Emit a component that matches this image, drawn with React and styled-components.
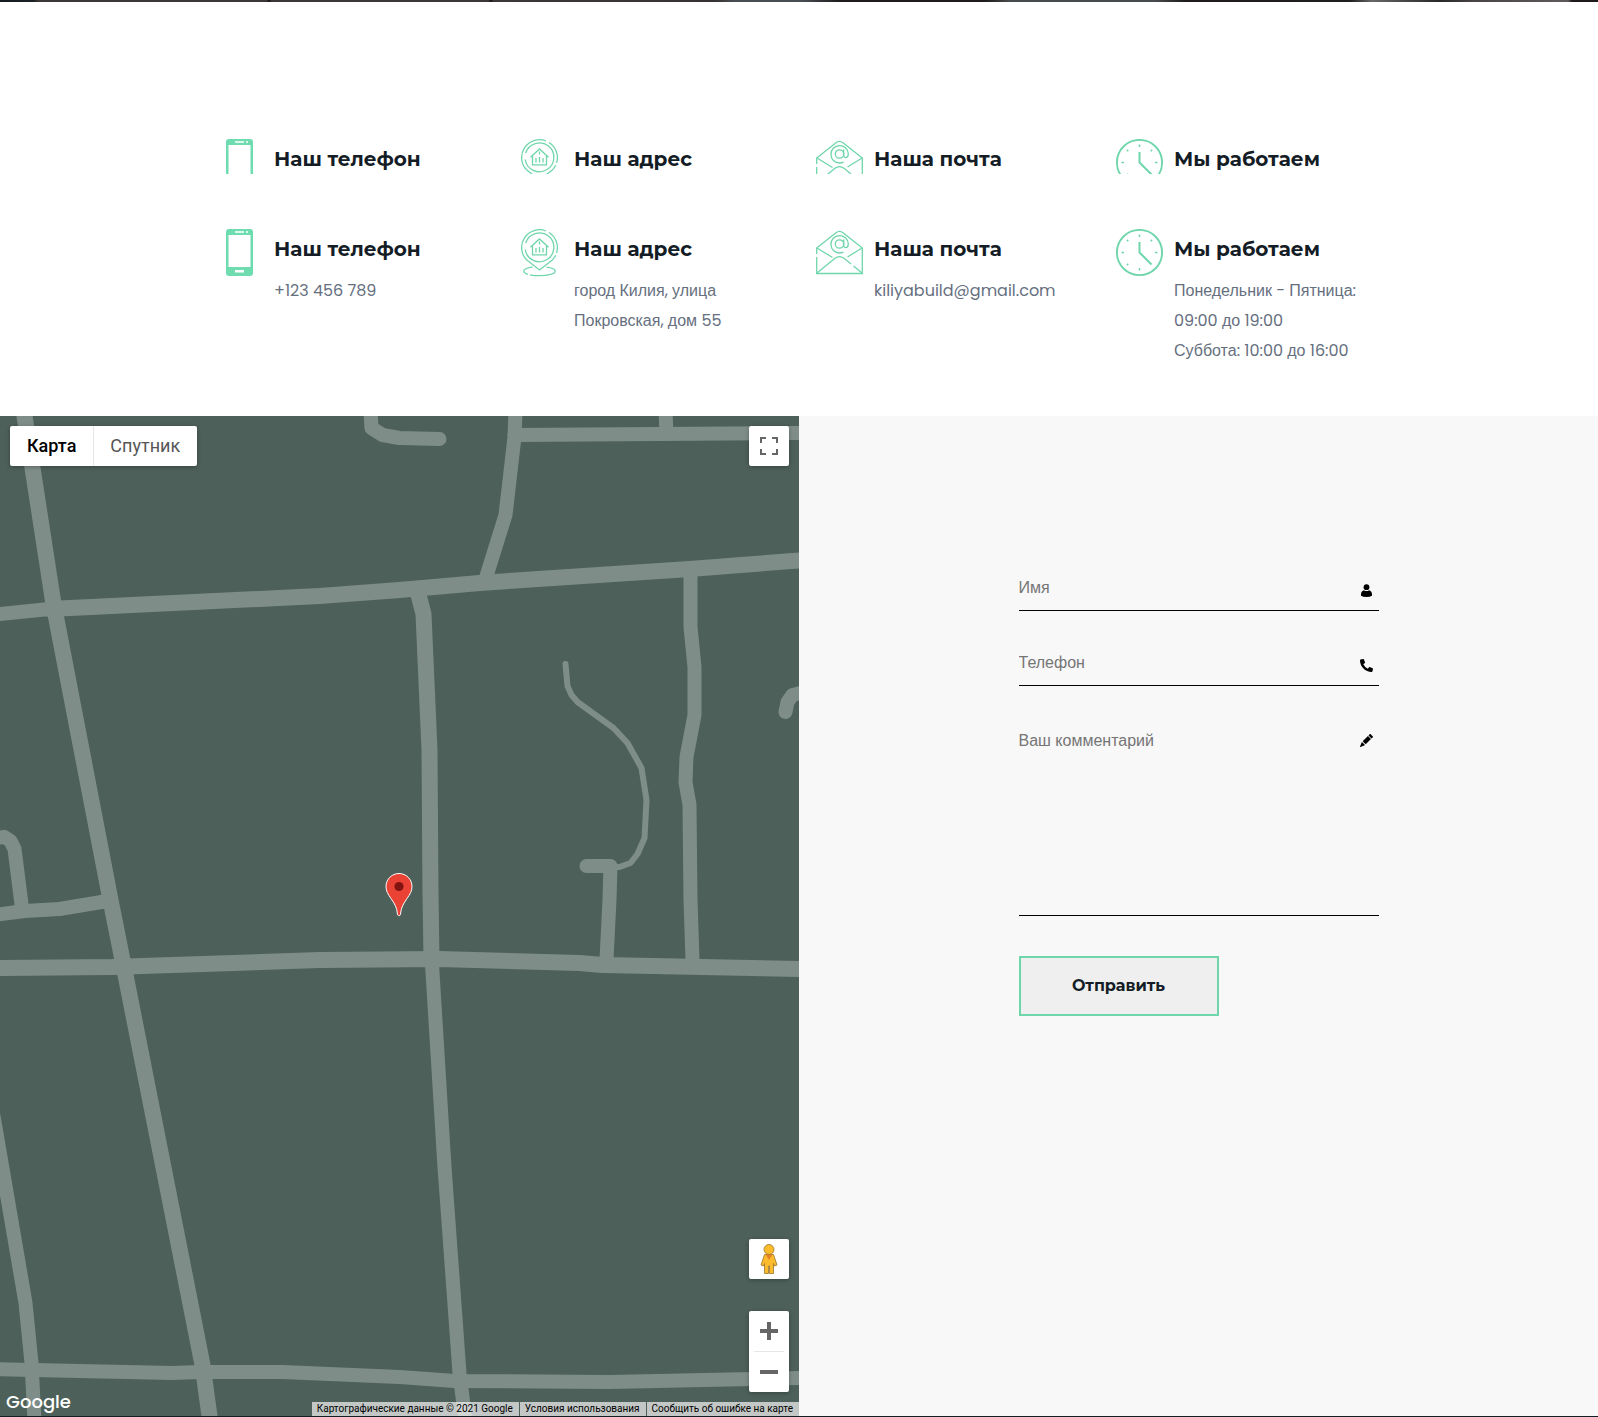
import React from "react";
import styled, { createGlobalStyle } from "styled-components";
import { BsPencilFill } from "react-icons/bs";
import { FaPhoneAlt } from "react-icons/fa";

const fonts = {
  heading: '"Montserrat", "Inter", sans-serif',
  body: '"Poppins", "Liberation Sans", Arial, sans-serif',
  field: '"Liberation Sans", Arial, sans-serif',
  map: '"Roboto", Arial, sans-serif',
};

const colors = {
  accent: "#6fd6ab",
  ink: "#141d26",
  muted: "#666f80",
  land: "#4d6059",
  road: "#7f8d89",
  panel: "#f8f8f8",
};

const GlobalStyle = createGlobalStyle`
  *, *::before, *::after { box-sizing: border-box; }
  body {
    margin: 0;
    background: #fff;
    color: ${colors.ink};
    font-family: ${fonts.body};
    font-size: 16px;
  }
  h3, p { margin: 0; }
`;

const HeroEdge = styled.div`
  height: 2px;
  background: linear-gradient(
    90deg,
    #161b20 0, #1d2226 34px, #3b3736 38px, #3b3736 267px, #1d1a1a 268px, #1d1a1a 270px,
    #3b3736 271px, #3b3736 489px, #1d1a1a 490px, #1d1a1a 492px, #3b3736 493px, #363231 715px,
    #4a4f54 735px, #4a4f54 800px, #1f1b1e 840px, #1f1b1e 985px, #484b4d 1010px, #484b4d 1155px,
    #1f1b1f 1185px, #211e22 1350px, #6a6769 1372px, #4a4a4c 1400px, #2a2729 1440px,
    #494547 1475px, #5e5a5b 1568px, #1e1a1a 1572px
  );
`;

const Contacts = styled.section`
  padding: 137px 0 50px;
`;

const ContactGrid = styled.div`
  display: grid;
  grid-template-columns: repeat(4, 1fr);
  max-width: 1200px;
  margin: 0 auto;
  ${(p) => p.$peek && "height: 35px; margin-bottom: 55px; overflow: hidden;"}
`;

const ContactCard = styled.article`
  display: grid;
  grid-template-columns: 50px 1fr;
  column-gap: 10px;
  padding: 0 15px;
`;

const ContactIcon = styled.svg`
  display: block;
  width: 50px;
  height: 48px;
  fill: none;
  stroke: ${colors.accent};
  stroke-width: 1.3;
`;

const ContactTitle = styled.h3`
  padding: 8px 0 15px;
  font: 700 20px/24px ${fonts.heading};
`;

const ContactText = styled.p`
  color: ${colors.muted};
  font-size: 16px;
  line-height: 30px;
`;

const Split = styled.section`
  display: grid;
  grid-template-columns: 1fr 1fr;
  min-height: 1000px;
`;

const MapPane = styled.div`
  position: relative;
  overflow: hidden;
  background: ${colors.land};
  font-family: ${fonts.map};
`;

const MapDrawing = styled.svg`
  position: absolute;
  inset: 0;
  width: 100%;
  height: 100%;
`;

const MapControl = styled.div`
  position: absolute;
  display: flex;
  background: #fff;
  border-radius: 2px;
  box-shadow: 0 1px 4px rgba(0, 0, 0, 0.3);
`;

const TypeSwitch = styled(MapControl)`
  top: 10px;
  left: 10px;
`;

const TypeButton = styled.button`
  height: 40px;
  padding: 0 17px;
  border: 0;
  background: none;
  color: ${(p) => (p.$active ? "#000" : "#565656")};
  font: ${(p) => (p.$active ? 500 : 400)} 18px/40px ${fonts.map};
  & + & { box-shadow: inset 1px 0 #e6e6e6; }
`;

const TopRight = styled(MapControl)`
  top: 10px;
  right: 10px;
`;

const BottomRight = styled.div`
  position: absolute;
  right: 10px;
  bottom: 24px;
  display: grid;
  gap: 32px;
  ${MapControl} {
    position: static;
    flex-direction: column;
    align-items: center;
  }
`;

const IconButton = styled.button`
  display: grid;
  place-items: center;
  width: 40px;
  height: 40px;
  padding: 0;
  border: 0;
  background: none;
  color: #666;
`;

const Divider = styled.span`
  width: 30px;
  height: 1px;
  background: #e6e6e6;
`;

const GoogleLink = styled.a`
  position: absolute;
  left: 6px;
  bottom: 2px;
  color: #fff;
  font: 500 18px/24px "Product Sans", "Poppins", sans-serif;
  text-decoration: none;
`;

const Attribution = styled.div`
  position: absolute;
  right: 0;
  bottom: 0;
  display: flex;
  gap: 1px;
`;

const Credit = styled.span`
  padding: 0 6px 0 5px;
  background: rgba(245, 245, 245, 0.7);
  color: #000;
  font-size: 10px;
  line-height: 14px;
  text-decoration: none;
  white-space: nowrap;
`;

const FormPane = styled.div`
  padding: 145px 15px 60px;
  background: ${colors.panel};
`;

const Form = styled.form`
  width: 100%;
  max-width: 360px;
  margin: 0 auto;
`;

const Field = styled.label`
  position: relative;
  display: block;
  margin-bottom: ${(p) => (p.$last ? 40 : 25)}px;
  color: #000;
  svg {
    position: absolute;
    top: 23px;
    right: 6px;
    width: 13px;
    height: 13px;
  }
`;

const inputStyle = `
  display: block;
  width: 100%;
  border: 0;
  border-bottom: 1px solid #000;
  border-radius: 0;
  outline: 0;
  background: none;
  font: 16px/20px ${fonts.field};
  &::placeholder { color: #757575; opacity: 1; }
`;

const Input = styled.input`
  ${inputStyle}
  height: 50px;
  padding: 4px 30px 0 0;
`;

const TextArea = styled.textarea`
  ${inputStyle}
  height: 205px;
  padding: 20px 30px 20px 0;
  resize: none;
`;

const Submit = styled.button`
  width: 200px;
  height: 60px;
  padding: 0;
  border: 2px solid ${colors.accent};
  background: #efefef;
  color: ${colors.ink};
  font: 700 16px/20px ${fonts.heading};
`;

const FooterEdge = styled.footer`
  height: 1px;
  background: #141d26;
`;

const PhoneGlyph = () => (
  <ContactIcon viewBox="0 0 50 48" aria-hidden="true">
    <path
      fill="#6fdcb0"
      fillRule="evenodd"
      stroke="none"
      d="M15 0h21a3 3 0 0 1 3 3v41a3 3 0 0 1-3 3H15a3 3 0 0 1-3-3V3a3 3 0 0 1 3-3ZM14.500 6v32h22V6ZM21 2.200v1.600h9V2.200ZM32 2.200v1.600h2V2.200ZM21 41v2.500h9V41Z"
    />
  </ContactIcon>
);

const AddressGlyph = () => (
  <ContactIcon viewBox="0 0 50 48" aria-hidden="true">
    <path d="M32 2A17.800 17.800 0 0 0 12.500 30.800L25.500 41 38 31.200Q40.500 29 41.700 26.200M35 3.500A17.800 17.800 0 0 1 42.600 24" />
    <path d="M11.200 20.500A14.400 14.400 0 1 0 11.700 14" />
    <path d="M18.500 17v8.800h14V17M16.500 18.300l9-8.300 9 8.300M25.500 12.500v3M22 19v4.500M25.500 18v5.500M29 19v4.500" />
    <path d="M18.500 38.200c-5 .6-8.700 2-8.700 4 0 1.300 1.700 2.400 4.200 3.200M16 45.800q4 .9 9.500.9c9 0 15.700-1.900 15.700-4.500 0-2-3.700-3.400-8.700-4" />
  </ContactIcon>
);

const MailGlyph = () => (
  <ContactIcon viewBox="0 0 50 48" aria-hidden="true">
    <path d="M2.700 25V19L22 3.800q3.500-2.800 7 0L48.300 19v25.500H2.700V28" />
    <path d="m3 19 15.500 9.500M48 19l-14.500 9M3 44l18-14.700q4.500-3.500 9 0l7 5.700M39.500 37l8.500 7" />
    <circle cx="25.500" cy="15" r="4.200" />
    <path d="M29.700 10.500V16c0 4 4.600 3.500 4.600-1.300A8.700 8.700 0 1 0 25.500 24c1.600 0 2.800-.3 4-.8" />
  </ContactIcon>
);

const ClockGlyph = () => (
  <ContactIcon viewBox="0 0 50 48" aria-hidden="true">
    <circle cx="25.500" cy="23.500" r="22.600" strokeWidth="1.900" />
    <path d="M25.500 13v10.500L37.500 35.500" strokeWidth="2" strokeLinejoin="round" />
    <path
      d="M25.500 5.500v2.500M25.500 39v2.500M7.500 23.500h2.500M41 23.500h2.500M12.900 10.900l1.400 1.400M36.700 12.300l1.400-1.400M12.900 36.100l1.400-1.400"
      strokeWidth="1.500"
    />
  </ContactIcon>
);

const PersonGlyph = () => (
  <svg viewBox="0 0 13 13" aria-hidden="true">
    <circle cx="6.500" cy="3.200" r="2.900" />
    <path d="M3.800 6.200C2 6.800 1 8.500 1 10.500v1.200Q3 13 6.500 13t5.500-1.300v-1.200c0-2-1-3.700-2.800-4.300Q6.500 8 3.800 6.200Z" />
  </svg>
);

const contacts = [
  { title: "Наш телефон", Icon: PhoneGlyph, lines: ["+123 456 789"] },
  { title: "Наш адрес", Icon: AddressGlyph, lines: ["город Килия, улица Покровская, дом 55"] },
  { title: "Наша почта", Icon: MailGlyph, lines: ["kiliyabuild@gmail.com"] },
  {
    title: "Мы работаем",
    Icon: ClockGlyph,
    lines: ["Понедельник - Пятница: 09:00 до 19:00", "Суббота: 10:00 до 16:00"],
  },
];

const roads = [
  { w: 16, d: "M25 0 54 188 111 484 126 559 203 949 210 1000" },
  { w: 14, d: "M-5 199 0 198 50 193" },
  { w: 16, d: "M50 193 320 180 400 174 480 167 690 153 805 144" },
  { w: 16, d: "M418 175 424 198 430 334 431 477 432 545" },
  { w: 14, d: "M432 540 445 751 460 957 466 1005" },
  { w: 14, d: "M516-5 515 21 506 99 487 160" },
  { w: 14, d: "M515 19 805 17" },
  { w: 14, d: "M666-5 667 18" },
  { w: 14, d: "M371-5 372 12 383 19 400 22 440 23" },
  { w: 14, d: "M691 157V211L695 251V299L687 341 686 366 690 389 691 484 693 544" },
  { w: 6, d: "M566 248 568 270 572 279 578 286 614 312 628 327 642 352 647 384 645 422 638 438 631 447 620 451 612 451" },
  { w: 14, d: "M587 450H611L610 484 607 543" },
  { w: 14, d: "M805 276 793 279 788 286 786 296" },
  { w: 16, d: "M-5 552 113 551 320 544 440 543 580 547 603 549 805 553" },
  { w: 14, d: "M-5 422 5 421 11 425 15 433 22 488" },
  { w: 14, d: "M-5 499 25 495 60 493 108 485" },
  { w: 14, d: "M-6 700 26 887 32 947 35 1005" },
  { w: 14, d: "M-5 953 33 954 173 957 200 956 283 956 400 961 455 965 610 966 805 962" },
];

const ContactRow = ({ peek }) => (
  <ContactGrid $peek={peek}>
    {contacts.map(({ title, Icon, lines }) => (
      <ContactCard key={title}>
        <Icon />
        <div>
          <ContactTitle>{title}</ContactTitle>
          {!peek && lines.map((line) => <ContactText key={line}>{line}</ContactText>)}
        </div>
      </ContactCard>
    ))}
  </ContactGrid>
);

const MapView = () => (
  <MapPane>
    <MapDrawing viewBox="0 0 800 1000" preserveAspectRatio="xMidYMid slice" aria-hidden="true">
      <g fill="none" stroke={colors.road} strokeLinecap="round" strokeLinejoin="round">
        {roads.map(({ w, d }) => (
          <path key={d} d={d} strokeWidth={w} />
        ))}
      </g>
      <path
        d="M399.500 457.500c-7.300 0-13 5.800-13 13 0 4.500 2 7.800 5 12 3.500 5 6 9.500 6.300 14.500.1 1.800.6 2.700 1.700 2.700s1.600-.9 1.700-2.700c.3-5 2.800-9.500 6.300-14.500 3-4.200 5-7.500 5-12 0-7.200-5.700-13-13-13Z"
        fill="#ea4335"
        stroke="#fff"
        strokeWidth="1"
      />
      <circle cx="399.500" cy="470.500" r="4.600" fill="#811411" />
    </MapDrawing>
    <TypeSwitch>
      <TypeButton type="button" $active aria-pressed="true">Карта</TypeButton>
      <TypeButton type="button" aria-pressed="false">Спутник</TypeButton>
    </TypeSwitch>
    <TopRight>
      <IconButton type="button" aria-label="Полный экран">
        <svg width="18" height="18" viewBox="0 0 18 18" fill="currentColor">
          <path d="M0 0v6h2V2h4V0H0ZM16 0h-4v2h4v4h2V0h-2ZM16 16h-4v2h6v-6h-2v4ZM2 12H0v6h6v-2H2v-4Z" />
        </svg>
      </IconButton>
    </TopRight>
    <BottomRight>
      <MapControl>
        <IconButton type="button" aria-label="Просмотр улиц">
          <svg width="18" height="30" viewBox="0 0 18 30" fill="#fbbb2a" stroke="#9a7530" strokeWidth=".8">
            <path d="M4.500 10.500h9L17 21l-2.500 1-1-2.500V29.500h-4V22h-1v7.500h-4V19.500l-1 2.500L1 21Z" />
            <path d="m5.500 10.500 3.500 5.500 3.500-5.500Z" fill="#e8822a" stroke="none" />
            <circle cx="9" cy="5.500" r="5" />
          </svg>
        </IconButton>
      </MapControl>
      <MapControl>
        <IconButton type="button" aria-label="Увеличить">
          <svg width="18" height="18" viewBox="0 0 18 18" fill="currentColor">
            <path d="M7 0h4v7h7v4h-7v7H7v-7H0V7h7Z" />
          </svg>
        </IconButton>
        <Divider />
        <IconButton type="button" aria-label="Уменьшить">
          <svg width="18" height="18" viewBox="0 0 18 18" fill="currentColor">
            <path d="M0 7h18v4H0Z" />
          </svg>
        </IconButton>
      </MapControl>
    </BottomRight>
    <GoogleLink href="#google">Google</GoogleLink>
    <Attribution>
      <Credit>Картографические данные © 2021 Google</Credit>
      <Credit as="a" href="#terms">Условия использования</Credit>
      <Credit as="a" href="#report">Сообщить об ошибке на карте</Credit>
    </Attribution>
  </MapPane>
);

export default function App() {
  return (
    <>
      <GlobalStyle />
      <HeroEdge />
      <main>
        <Contacts>
          <ContactRow peek />
          <ContactRow />
        </Contacts>
        <Split>
          <MapView />
          <FormPane>
            <Form onSubmit={(e) => e.preventDefault()}>
              <Field>
                <Input type="text" placeholder="Имя" aria-label="Имя" />
                <PersonGlyph />
              </Field>
              <Field>
                <Input type="tel" placeholder="Телефон" aria-label="Телефон" />
                <FaPhoneAlt aria-hidden="true" />
              </Field>
              <Field $last>
                <TextArea placeholder="Ваш комментарий" aria-label="Ваш комментарий" />
                <BsPencilFill aria-hidden="true" />
              </Field>
              <Submit type="submit">Отправить</Submit>
            </Form>
          </FormPane>
        </Split>
      </main>
      <FooterEdge />
    </>
  );
}
